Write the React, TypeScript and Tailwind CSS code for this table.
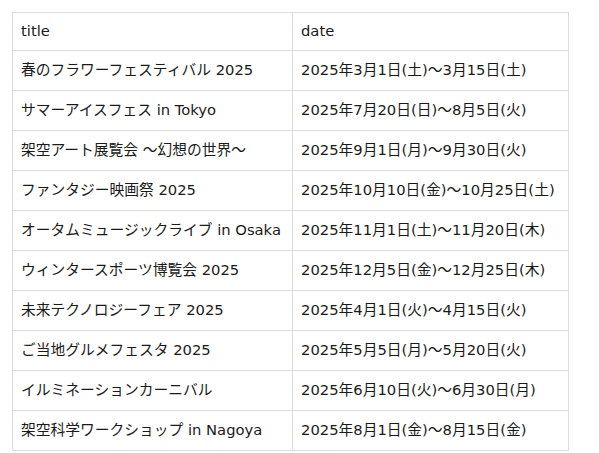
import React from "react";

const rows: [string, string][] = [
  ["春のフラワーフェスティバル 2025", "2025年3月1日(土)～3月15日(土)"],
  ["サマーアイスフェス in Tokyo", "2025年7月20日(日)～8月5日(火)"],
  ["架空アート展覧会 ～幻想の世界～", "2025年9月1日(月)～9月30日(火)"],
  ["ファンタジー映画祭 2025", "2025年10月10日(金)～10月25日(土)"],
  ["オータムミュージックライブ in Osaka", "2025年11月1日(土)～11月20日(木)"],
  ["ウィンタースポーツ博覧会 2025", "2025年12月5日(金)～12月25日(木)"],
  ["未来テクノロジーフェア 2025", "2025年4月1日(火)～4月15日(火)"],
  ["ご当地グルメフェスタ 2025", "2025年5月5日(月)～5月20日(火)"],
  ["イルミネーションカーニバル", "2025年6月10日(火)～6月30日(月)"],
  ["架空科学ワークショップ in Nagoya", "2025年8月1日(金)～8月15日(金)"],
];

export default function App() {
  return (
    <div
      className="p-3 bg-white text-[#1a1a1a] text-[14.75px]"
      style={{ fontFamily: '"DejaVu Sans", "Noto Sans CJK JP", sans-serif' }}
    >
      <table className="border-collapse table-fixed w-[556px]">
        <thead>
          <tr className="h-[38px]">
            <th className="border border-[#dcdcdc] px-2 text-left font-normal w-[280px]">title</th>
            <th className="border border-[#dcdcdc] px-2 text-left font-normal w-[276px]">date</th>
          </tr>
        </thead>
        <tbody>
          {rows.map(([t, d]) => (
            <tr key={t} className="h-[40px]">
              <td className="border border-[#dcdcdc] px-2 whitespace-nowrap">{t}</td>
              <td className="border border-[#dcdcdc] px-2 whitespace-nowrap">{d}</td>
            </tr>
          ))}
        </tbody>
      </table>
    </div>
  );
}
